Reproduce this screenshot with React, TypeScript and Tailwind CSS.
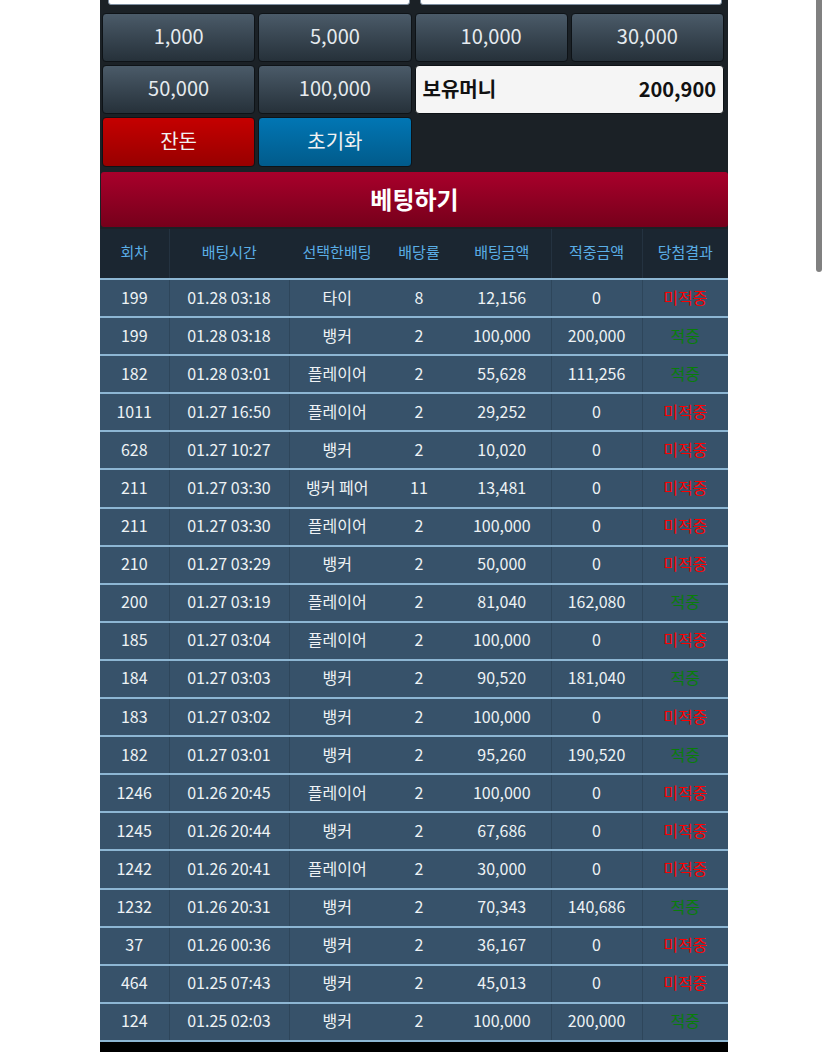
import React from 'react';

type Bet = {
  round: string;
  time: string;
  pick: string;
  odds: string;
  amount: string;
  win: string;
  hit: boolean;
};

const bets: Bet[] = [
  { round: '199', time: '01.28 03:18', pick: '타이', odds: '8', amount: '12,156', win: '0', hit: false },
  { round: '199', time: '01.28 03:18', pick: '뱅커', odds: '2', amount: '100,000', win: '200,000', hit: true },
  { round: '182', time: '01.28 03:01', pick: '플레이어', odds: '2', amount: '55,628', win: '111,256', hit: true },
  { round: '1011', time: '01.27 16:50', pick: '플레이어', odds: '2', amount: '29,252', win: '0', hit: false },
  { round: '628', time: '01.27 10:27', pick: '뱅커', odds: '2', amount: '10,020', win: '0', hit: false },
  { round: '211', time: '01.27 03:30', pick: '뱅커 페어', odds: '11', amount: '13,481', win: '0', hit: false },
  { round: '211', time: '01.27 03:30', pick: '플레이어', odds: '2', amount: '100,000', win: '0', hit: false },
  { round: '210', time: '01.27 03:29', pick: '뱅커', odds: '2', amount: '50,000', win: '0', hit: false },
  { round: '200', time: '01.27 03:19', pick: '플레이어', odds: '2', amount: '81,040', win: '162,080', hit: true },
  { round: '185', time: '01.27 03:04', pick: '플레이어', odds: '2', amount: '100,000', win: '0', hit: false },
  { round: '184', time: '01.27 03:03', pick: '뱅커', odds: '2', amount: '90,520', win: '181,040', hit: true },
  { round: '183', time: '01.27 03:02', pick: '뱅커', odds: '2', amount: '100,000', win: '0', hit: false },
  { round: '182', time: '01.27 03:01', pick: '뱅커', odds: '2', amount: '95,260', win: '190,520', hit: true },
  { round: '1246', time: '01.26 20:45', pick: '플레이어', odds: '2', amount: '100,000', win: '0', hit: false },
  { round: '1245', time: '01.26 20:44', pick: '뱅커', odds: '2', amount: '67,686', win: '0', hit: false },
  { round: '1242', time: '01.26 20:41', pick: '플레이어', odds: '2', amount: '30,000', win: '0', hit: false },
  { round: '1232', time: '01.26 20:31', pick: '뱅커', odds: '2', amount: '70,343', win: '140,686', hit: true },
  { round: '37', time: '01.26 00:36', pick: '뱅커', odds: '2', amount: '36,167', win: '0', hit: false },
  { round: '464', time: '01.25 07:43', pick: '뱅커', odds: '2', amount: '45,013', win: '0', hit: false },
  { round: '124', time: '01.25 02:03', pick: '뱅커', odds: '2', amount: '100,000', win: '200,000', hit: true },
];

const chips = ['1,000', '5,000', '10,000', '30,000', '50,000', '100,000'];

const darkBtn =
  'h-[49px] pb-[3px] rounded-[4px] border border-[#0e1317] bg-gradient-to-b from-[#4b5b69] to-[#26313a] text-[20px] text-[#e6ebef] flex items-center justify-center';

const App = () => {
  return (
    <div className="relative min-h-[1052px] bg-white" style={{ fontFamily: '"Noto Sans CJK KR", "Noto Sans", sans-serif' }}>
      {/* scroll thumb */}
      <div className="absolute left-[816px] top-0 h-[272px] w-[6px] rounded-b-[3px] bg-[#808080]" />

      <div className="ml-[100px] w-[628px] bg-[#1b2126]">
        {/* inputs, mostly scrolled off */}
        <div className="flex gap-[10px] pl-[8px] pr-[6px] h-[5px] overflow-hidden items-end">
          <div className="h-[40px] flex-1 shrink-0 rounded-[3px] border border-[#7d8ea0] bg-white" />
          <div className="h-[40px] flex-1 shrink-0 rounded-[3px] border border-[#7d8ea0] bg-white" />
        </div>

        <div className="grid grid-cols-4 gap-[3px] pl-[2px] pr-[4px] pt-[8px]">
          {chips.slice(0, 4).map((c) => (
            <div key={c} className={darkBtn}>{c}</div>
          ))}
          {chips.slice(4).map((c) => (
            <div key={c} className={darkBtn}>{c}</div>
          ))}
          <div className="col-span-2 h-[49px] pb-[2px] rounded-[4px] border border-[#0e1317] bg-[#f5f5f5] flex items-center justify-between pl-[7px] pr-[7px] text-[20px] font-bold text-[#111]">
            <span>보유머니</span>
            <span>200,900</span>
          </div>
          <div className="h-[50px] pb-[3px] rounded-[4px] border border-[#0e1317] bg-gradient-to-b from-[#c50000] to-[#980000] text-[20px] text-[#f2f2f2] flex items-center justify-center">
            잔돈
          </div>
          <div className="h-[50px] pb-[3px] rounded-[4px] border border-[#0e1317] bg-gradient-to-b from-[#0176b4] to-[#015b8b] text-[20px] text-[#f2f2f2] flex items-center justify-center">
            초기화
          </div>
        </div>

        <div className="mt-[5px] ml-[1px] h-[55px] pb-[2px] rounded-[3px] bg-gradient-to-b from-[#a9002b] to-[#76001b] flex items-center justify-center text-[24px] font-bold text-white">
          베팅하기
        </div>

        <table className="mt-[2px] w-full table-fixed border-collapse text-center">
          <colgroup>
            <col className="w-[69px]" />
            <col className="w-[120px]" />
            <col className="w-[96px]" />
            <col className="w-[68px]" />
            <col className="w-[98px]" />
            <col className="w-[91px]" />
            <col className="w-[86px]" />
          </colgroup>
          <thead>
            <tr className="h-[50px] bg-[#1b2631] border-b-2 border-[#8db6d3] text-[15px] text-[#5aaee6]">
              <th className="font-normal pb-[2px] border-r border-[#243240]">회차</th>
              <th className="font-normal pb-[2px]">배팅시간</th>
              <th className="font-normal pb-[2px]">선택한배팅</th>
              <th className="font-normal pb-[2px]">배당률</th>
              <th className="font-normal pb-[2px] border-r border-[#243240]">배팅금액</th>
              <th className="font-normal pb-[2px] border-r border-[#243240]">적중금액</th>
              <th className="font-normal pb-[2px]">당첨결과</th>
            </tr>
          </thead>
          <tbody>
            {bets.map((b, i) => (
              <tr key={i} className="h-[38.1px] bg-[#37526a] border-b-2 border-[#8db6d3] text-[16px] text-[#eef2f5]">
                <td className="pb-[3px] border-r border-[#2e465b]">{b.round}</td>
                <td className="pb-[3px] border-r border-[#2e465b]">{b.time}</td>
                <td className="pb-[3px]">{b.pick}</td>
                <td className="pb-[3px]">{b.odds}</td>
                <td className="pb-[3px] border-r border-[#2e465b]">{b.amount}</td>
                <td className="pb-[3px] border-r border-[#2e465b]">{b.win}</td>
                <td className={b.hit ? 'pb-[3px] text-[#0a7d0a]' : 'pb-[3px] text-[#ff0000]'}>{b.hit ? '적중' : '미적중'}</td>
              </tr>
            ))}
          </tbody>
        </table>
        <div className="h-[12px] bg-black" />
      </div>
    </div>
  );
};

export default App;
